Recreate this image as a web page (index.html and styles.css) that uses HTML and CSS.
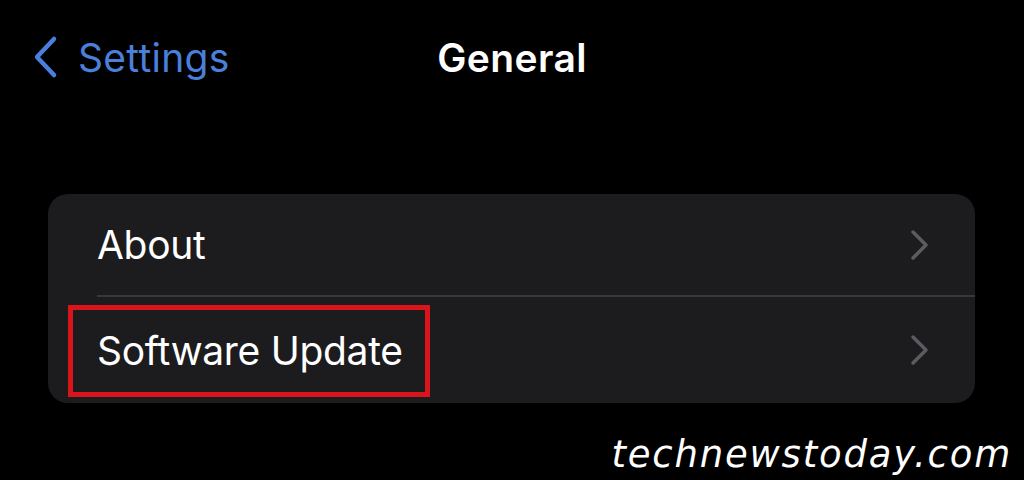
FILE: index.html
```html
<!DOCTYPE html>
<html>
<head>
<meta charset="utf-8">
<link rel="stylesheet" href="styles.css">
</head>
<body>
<div class="page">
  <header class="nav">
    <div class="back">
      <svg class="back-icon" width="26" height="44" viewBox="0 0 26 44"><path d="M22 4 L5 22 L22 40" fill="none" stroke="#4a80dc" stroke-width="4.5" stroke-linecap="round" stroke-linejoin="round"/></svg>
      <span class="back-label">Settings</span>
    </div>
    <div class="title">General</div>
    <div></div>
  </header>
  <div class="card">
    <div class="row">
      <span class="label">About</span>
      <svg class="chev" width="20" height="32" viewBox="0 0 20 32"><path d="M3 3 L16 16 L3 29" fill="none" stroke="#5b5b60" stroke-width="3.5" stroke-linecap="round" stroke-linejoin="round"/></svg>
    </div>
    <div class="row row-last">
      <span class="label">Software Update</span>
      <svg class="chev" width="20" height="32" viewBox="0 0 20 32"><path d="M3 3 L16 16 L3 29" fill="none" stroke="#5b5b60" stroke-width="3.5" stroke-linecap="round" stroke-linejoin="round"/></svg>
      <div class="highlight"></div>
    </div>
  </div>
  <div class="watermark">technewstoday.com</div>
</div>
</body>
</html>
```
FILE: styles.css
```css
* { box-sizing: border-box; }
html, body {
  margin: 0;
  padding: 0;
  background: #000;
}
body {
  width: 1024px;
  height: 480px;
  overflow: hidden;
  font-family: Inter, "Liberation Sans", sans-serif;
  color: #fff;
}
.page {
  display: flex;
  flex-direction: column;
}
.nav {
  display: grid;
  grid-template-columns: 1fr auto 1fr;
  align-items: center;
  height: 114px;
}
.back {
  display: flex;
  align-items: center;
  gap: 20px;
  padding-left: 32px;
}
.back-icon { display: block; }
.back-label {
  font-size: 39px;
  color: #4a80dc;
  letter-spacing: 0.3px;
}
.title {
  font-size: 39px;
  font-weight: 600;
  color: #fff;
  letter-spacing: 0.4px;
}
.card {
  margin-top: 80px;
  margin-left: 48px;
  width: 927px;
  background: #1c1c1e;
  border-radius: 20px;
  padding-left: 49px;
}
.row {
  position: relative;
  display: flex;
  align-items: center;
  justify-content: space-between;
  height: 103px;
  padding-right: 45px;
  border-bottom: 2px solid #38383c;
}
.row-last {
  border-bottom: none;
  height: 106px;
}
.label {
  font-size: 39px;
  color: #fff;
  letter-spacing: -0.3px;
}
.chev { display: block; }
.highlight {
  position: absolute;
  left: -29px;
  top: 8px;
  width: 362px;
  height: 92px;
  border: 5px solid #d9141a;
}
.watermark {
  align-self: flex-end;
  margin-top: 30px;
  margin-right: 12px;
  font-family: "DejaVu Sans", sans-serif;
  font-style: italic;
  font-weight: 400;
  font-size: 37px;
  color: #fff;
  letter-spacing: 1.8px;
  line-height: 44px;
}
```
